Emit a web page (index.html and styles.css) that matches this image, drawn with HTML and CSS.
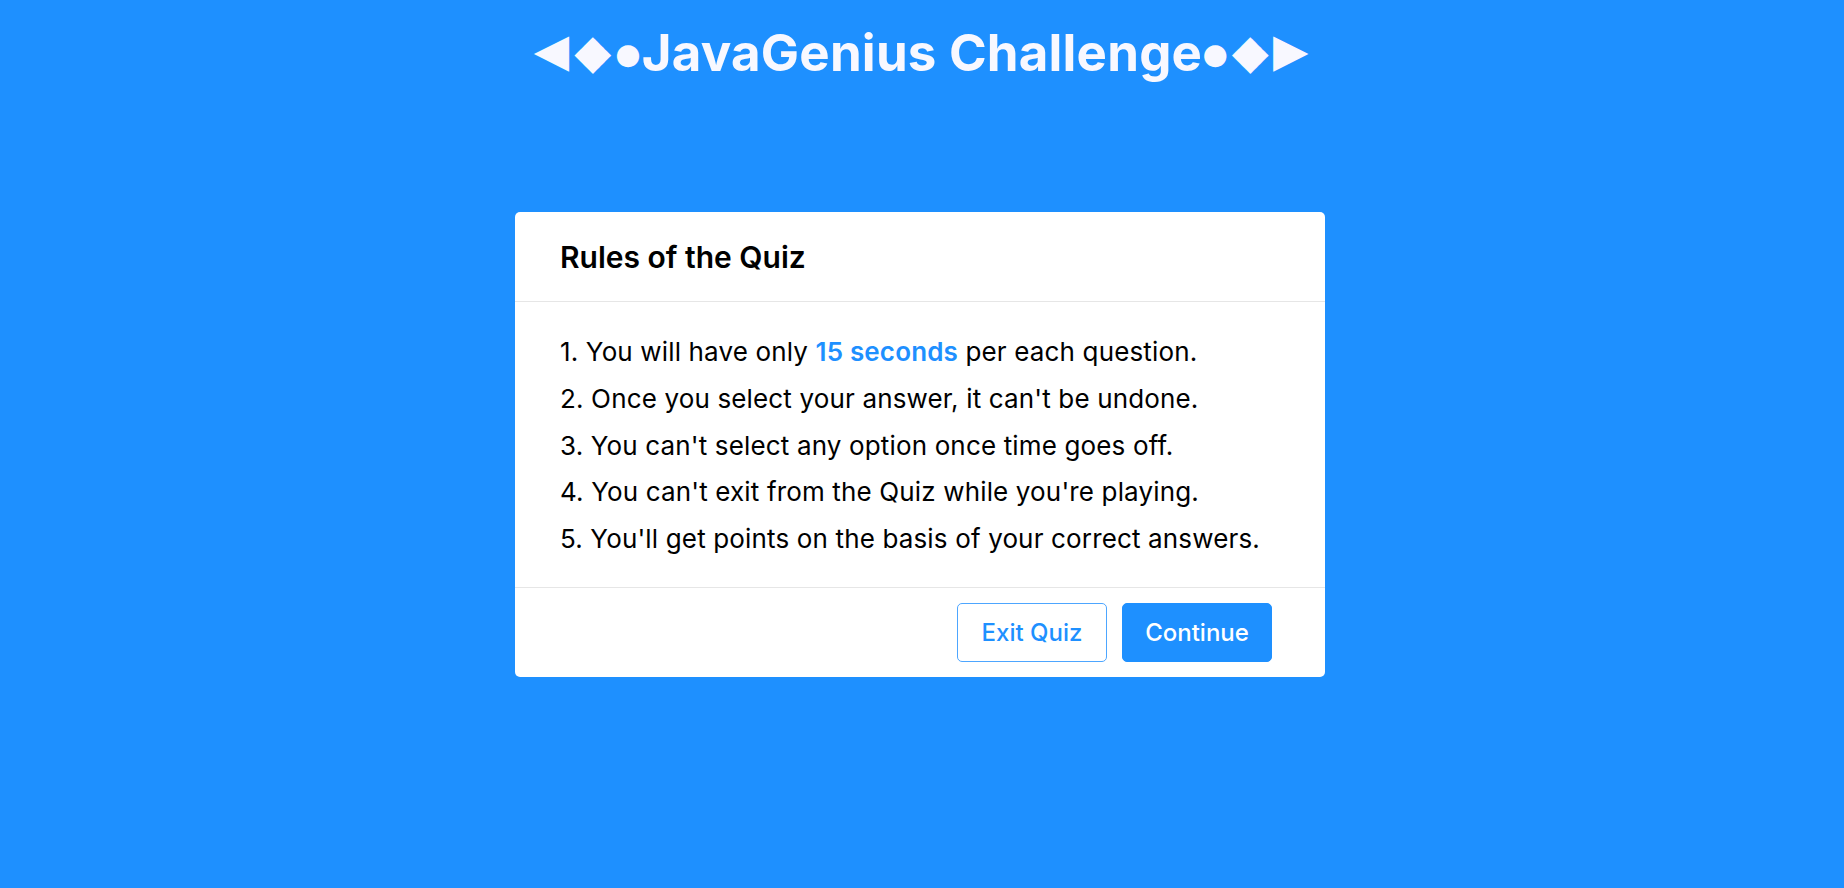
FILE: index.html
```html
<!DOCTYPE html>
<html lang="en">
<head>
<meta charset="utf-8">
<title>JavaGenius Challenge</title>
<link rel="stylesheet" href="styles.css">
</head>
<body>
  <header class="site-header">
    <h1 class="site-title"><span class="sym sym-tri-l">◀</span><span class="sym sym-dia-l">◆</span><span class="sym sym-dot-l">●</span>JavaGenius Challenge<span class="sym sym-dot-r">●</span><span class="sym sym-dia-r">◆</span><span class="sym sym-tri-r">▶</span></h1>
  </header>
  <main class="stage">
    <section class="info-box">
      <div class="info-title">Rules of the Quiz</div>
      <div class="info-list">
        <div class="info">1. You will have only <span class="accent">15 seconds</span> per each question.</div>
        <div class="info">2. Once you select your answer, it can't be undone.</div>
        <div class="info">3. You can't select any option once time goes off.</div>
        <div class="info">4. You can't exit from the Quiz while you're playing.</div>
        <div class="info">5. You'll get points on the basis of your correct answers.</div>
      </div>
      <div class="buttons">
        <button class="btn btn-outline">Exit Quiz</button>
        <button class="btn btn-solid">Continue</button>
      </div>
    </section>
  </main>
</body>
</html>
```

FILE: styles.css
```css
* { box-sizing: border-box; }
html, body { margin: 0; padding: 0; }
body {
  background: #1e90ff;
  font-family: Inter, "Open Sans", sans-serif;
  color: #000;
  min-height: 888px;
  padding-right: 4px;
}
.site-header {
  display: flex;
  justify-content: center;
  padding-top: 23px;
}
.site-title {
  margin: 0;
  color: #f8f8ff;
  font-size: 51px;
  font-weight: 700;
  line-height: 60px;
  letter-spacing: 0.2px;
  white-space: nowrap;
}
.sym {
  display: inline-block;
  font-family: "DejaVu Sans", sans-serif;
  text-align: center;
  line-height: 1;
  letter-spacing: 0;
}
.sym-tri-l, .sym-tri-r { font-size: 46px; vertical-align: 5px; }
.sym-dia-l, .sym-dia-r { font-size: 48px; vertical-align: 3px; }
.sym-dot-l, .sym-dot-r { font-size: 29px; vertical-align: 7px; }
.sym-tri-l { width: 41px; }
.sym-dia-l { width: 42px; }
.sym-dot-l { width: 28px; }
.sym-dot-r { width: 26px; }
.sym-dia-r { width: 44px; }
.sym-tri-r { width: 37px; }
.stage {
  display: flex;
  justify-content: center;
  padding-top: 129px;
}
.info-box {
  width: 810px;
  background: #fff;
  border-radius: 5px;
}
.info-title {
  height: 90px;
  padding: 0 45px;
  display: flex;
  align-items: center;
  font-size: 30px;
  font-weight: 600;
  border-bottom: 1px solid #e6e6e6;
}
.info-list {
  padding: 27px 45px 24px;
}
.info {
  font-size: 26px;
  line-height: 46.8px;
  letter-spacing: 0.15px;
}
.accent {
  color: #1e90ff;
  font-weight: 600;
}
.buttons {
  height: 90px;
  border-top: 1px solid #e6e6e6;
  display: flex;
  justify-content: flex-end;
  align-items: center;
  gap: 15px;
  padding: 0 53px;
}
.btn {
  width: 150px;
  height: 59px;
  border-radius: 5px;
  font-family: inherit;
  font-size: 24px;
  font-weight: 500;
  cursor: pointer;
}
.btn-outline {
  background: #fff;
  color: #1e90ff;
  border: 1px solid #4da6ff;
}
.btn-solid {
  background: #1e90ff;
  color: #fff;
  border: 1px solid #1e90ff;
}
```
